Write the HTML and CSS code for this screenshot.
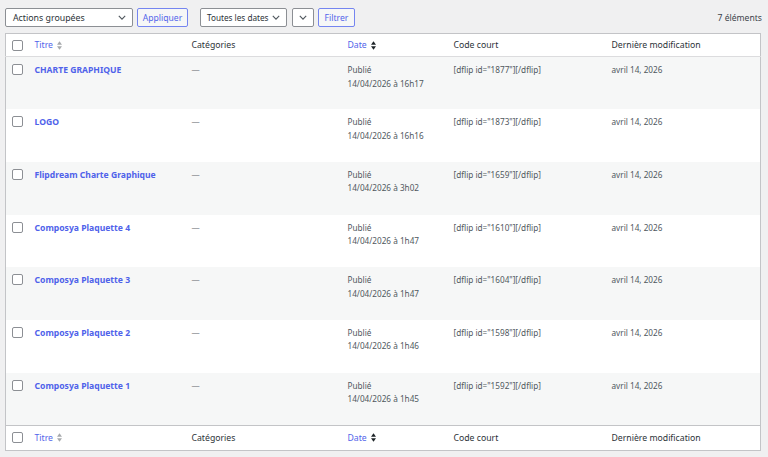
FILE: index.html
```html
<!DOCTYPE html>
<html lang="fr">
<head>
    <meta charset="UTF-8">
    <title>Flipbooks</title>
    <link rel="stylesheet" href="styles.css">
</head>
<body>
    <div class="tablenav">
        <div class="select wide">
            <span>Actions groupées</span>
            <svg class="chev" viewBox="0 0 10 6"><path d="M1 1l4 4 4-4"/></svg>
        </div>
        <button class="btn apply">Appliquer</button>
        <div class="select dates">
            <span>Toutes les dates</span>
            <svg class="chev" viewBox="0 0 10 6"><path d="M1 1l4 4 4-4"/></svg>
        </div>
        <div class="select tiny">
            <svg class="chev" viewBox="0 0 10 6"><path d="M1 1l4 4 4-4"/></svg>
        </div>
        <button class="btn filter">Filtrer</button>
        <span class="count">7 éléments</span>
    </div>

    <table class="list">
        <colgroup>
            <col class="c-cb">
            <col class="c-title">
            <col class="c-cat">
            <col class="c-date">
            <col class="c-code">
            <col class="c-mod">
        </colgroup>
        <thead>
            <tr>
                <th><span class="cb"></span></th>
                <th><a class="sort">Titre <svg class="arrows" viewBox="0 0 6 10"><path d="M3 0l3 4H0z"/><path d="M3 10l3-4H0z"/></svg></a></th>
                <th>Catégories</th>
                <th><a class="sort">Date <svg class="arrows active" viewBox="0 0 6 10"><path d="M3 0l3 4H0z"/><path d="M3 10l3-4H0z"/></svg></a></th>
                <th>Code court</th>
                <th>Dernière modification</th>
            </tr>
        </thead>
        <tbody id="rows"></tbody>
        <tfoot>
            <tr>
                <th><span class="cb"></span></th>
                <th><a class="sort">Titre <svg class="arrows" viewBox="0 0 6 10"><path d="M3 0l3 4H0z"/><path d="M3 10l3-4H0z"/></svg></a></th>
                <th>Catégories</th>
                <th><a class="sort">Date <svg class="arrows active" viewBox="0 0 6 10"><path d="M3 0l3 4H0z"/><path d="M3 10l3-4H0z"/></svg></a></th>
                <th>Code court</th>
                <th>Dernière modification</th>
            </tr>
        </tfoot>
    </table>

    <script>
        // liste des flipbooks
        const books = [
            ['CHARTE GRAPHIQUE', '16h17', '1877'],
            ['LOGO', '16h16', '1873'],
            ['Flipdream Charte Graphique', '3h02', '1659'],
            ['Composya Plaquette 4', '1h47', '1610'],
            ['Composya Plaquette 3', '1h47', '1604'],
            ['Composya Plaquette 2', '1h46', '1598'],
            ['Composya Plaquette 1', '1h45', '1592']
        ];

        const tbody = document.getElementById('rows');
        books.forEach(b => {
            const tr = document.createElement('tr');
            tr.innerHTML = `
                <td><span class="cb"></span></td>
                <td><a class="title">${b[0]}</a></td>
                <td class="dash">—</td>
                <td>Publié<br>14/04/2026 à ${b[1]}</td>
                <td>[dflip id="${b[2]}"][/dflip]</td>
                <td>avril 14, 2026</td>`;
            tbody.appendChild(tr);
        });
    </script>
</body>
</html>
```

FILE: styles.css
```css
body {
    margin: 0;
    padding: 8px 6px 0 5px;
    background: #f0f0f1;
    font-family: 'Noto Sans', 'Open Sans', sans-serif;
    font-size: 8.2px;
    color: #50575e;
}

.tablenav {
    display: flex;
    align-items: center;
    height: 19px;
    margin-bottom: 6px;
}

.select {
    box-sizing: border-box;
    height: 19px;
    display: flex;
    align-items: center;
    justify-content: space-between;
    padding: 0 6px 0 7px;
    background: #fff;
    border: 1px solid #8c8f94;
    border-radius: 2px;
    color: #2c3338;
    font-size: 8.8px;
    white-space: nowrap;
}

.select.wide {
    width: 128px;
    margin-right: 4px;
}

.select.dates {
    width: 87px;
    margin-left: 12px;
    margin-right: 5px;
    padding: 0 6px 0 6px;
    font-size: 8.2px;
}

.select.tiny {
    width: 22px;
    justify-content: center;
    padding: 0;
    margin-right: 4px;
}

.chev {
    width: 8px;
    height: 5px;
    fill: none;
    stroke: #50575e;
    stroke-width: 1.4;
}

.btn {
    box-sizing: border-box;
    height: 19px;
    padding: 0;
    background: #f6f7f7;
    border: 1px solid #7585f0;
    border-radius: 2px;
    color: #5265ea;
    font-family: inherit;
    font-size: 8.6px;
}

.btn.apply {
    width: 51px;
}

.btn.filter {
    width: 37px;
}

.count {
    margin-left: auto;
    color: #3c434a;
    font-size: 8.6px;
}

.list {
    width: 756px;
    border-collapse: collapse;
    table-layout: fixed;
    background: #fff;
    border: 1px solid #c3c4c7;
}

.c-cb { width: 21px; }
.c-title { width: 157px; }
.c-cat { width: 156px; }
.c-date { width: 106px; }
.c-code { width: 158px; }
.c-mod { width: 157px; }

th {
    height: 22px;
    padding: 0 8px;
    text-align: left;
    font-weight: normal;
    font-size: 8.7px;
    color: #2c3338;
}

th:first-child,
td:first-child {
    padding: 0 0 0 6px;
}

thead th {
    border-bottom: 1px solid #dcdcde;
}

tfoot th {
    height: 24px;
    border-top: 1px solid #c3c4c7;
}

td {
    height: 52.7px;
    box-sizing: border-box;
    padding: 6px 8px 0;
    vertical-align: top;
    line-height: 13.5px;
}

td:first-child {
    padding-top: 7px;
}

tbody tr:nth-child(odd) {
    background: #f6f7f7;
}

.cb {
    display: block;
    box-sizing: border-box;
    width: 11px;
    height: 11px;
    border: 1px solid #8c8f94;
    border-radius: 2px;
    background: #fff;
}

.sort {
    color: #5265ea;
    display: inline-flex;
    align-items: center;
    gap: 4px;
}

.arrows {
    width: 5px;
    height: 9px;
    fill: #a7aaad;
}

.arrows.active {
    fill: #1d2327;
}

.title {
    color: #4f62ea;
    font-weight: 700;
    font-size: 8.6px;
}

.dash {
    color: #8c8f94;
}
```
